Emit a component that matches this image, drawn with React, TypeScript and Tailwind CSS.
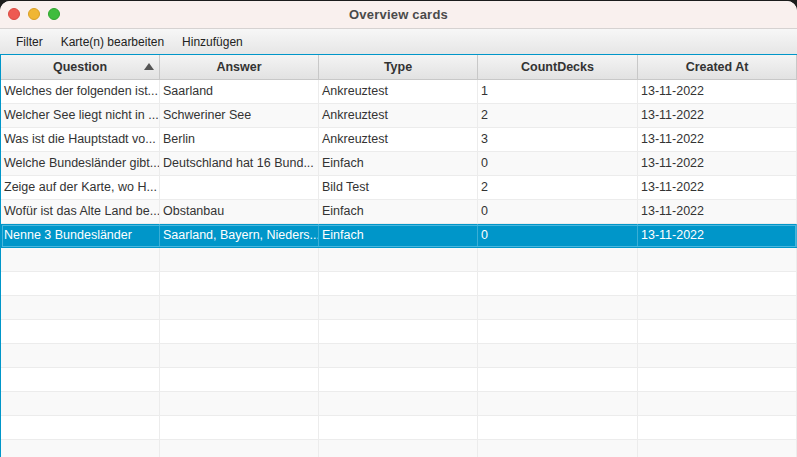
type Card = {
  question: string;
  answer: string;
  type: string;
  count: string;
  created: string;
};

const cards: Card[] = [
  { question: "Welches der folgenden ist...", answer: "Saarland", type: "Ankreuztest", count: "1", created: "13-11-2022" },
  { question: "Welcher See liegt nicht in ...", answer: "Schweriner See", type: "Ankreuztest", count: "2", created: "13-11-2022" },
  { question: "Was ist die Hauptstadt vo...", answer: "Berlin", type: "Ankreuztest", count: "3", created: "13-11-2022" },
  { question: "Welche Bundesländer gibt...", answer: "Deutschland hat 16 Bund...", type: "Einfach", count: "0", created: "13-11-2022" },
  { question: "Zeige auf der Karte, wo H...", answer: "", type: "Bild Test", count: "2", created: "13-11-2022" },
  { question: "Wofür ist das Alte Land be...", answer: "Obstanbau", type: "Einfach", count: "0", created: "13-11-2022" },
  { question: "Nenne 3 Bundesländer", answer: "Saarland, Bayern, Nieders...", type: "Einfach", count: "0", created: "13-11-2022" },
];

const SELECTED = 6;
const EMPTY_ROWS = 9;

// spaltenbreiten wie im JavaFX TableView
const cols = "grid grid-cols-[159px_159px_159px_160px_1fr]";

const headers = ["Question", "Answer", "Type", "CountDecks", "Created At"];

export default function App() {
  return (
    <div className="w-[797px] h-[457px] overflow-hidden bg-[#1c1c1c] font-['Liberation_Sans',Arial,sans-serif]">
      <div className="h-full mt-px rounded-t-[10px] overflow-hidden bg-white flex flex-col">
        {/* Titelleiste */}
        <div className="shrink-0 relative h-[28px] bg-[#f9f0ee] border-b border-[#d6d2d1] flex items-center justify-center">
          <div className="absolute left-[8px] top-[7px] flex gap-[8px]">
            <span className="w-[12px] h-[12px] rounded-full bg-[#ee5a52] border border-[#d94a42]" />
            <span className="w-[12px] h-[12px] rounded-full bg-[#f0b634] border border-[#d99f24]" />
            <span className="w-[12px] h-[12px] rounded-full bg-[#3fbc3e] border border-[#2fa52e]" />
          </div>
          <span className="text-[13px] font-bold text-[#4a4a4a] tracking-[0.2px]">Overview cards</span>
        </div>

        {/* Menü */}
        <div className="shrink-0 h-[25px] bg-gradient-to-b from-[#f7f7f7] to-[#e6e6e6] flex items-center text-[12px] text-[#222] pl-[16px] gap-[18px]">
          <span>Filter</span>
          <span>Karte(n) bearbeiten</span>
          <span>Hinzufügen</span>
        </div>

        {/* Tabelle */}
        <div className="flex-1 border-t border-l border-[#0096c9] bg-white">
          <div className={`${cols} h-[25px] bg-gradient-to-b from-[#f4f4f4] to-[#e2e2e2] border-b border-[#c8c8c8]`}>
            {headers.map((h, i) => (
              <div
                key={h}
                className="relative flex items-center justify-center border-r border-[#c8c8c8] text-[12.5px] font-bold text-[#333]"
              >
                {h}
                {i === 0 && (
                  <span className="absolute right-[5px] top-[8px] w-0 h-0 border-l-[5px] border-r-[5px] border-b-[7px] border-l-transparent border-r-transparent border-b-[#555]" />
                )}
              </div>
            ))}
          </div>

          {cards.map((c, i) => {
            const sel = i === SELECTED;
            return (
              <div
                key={i}
                className={`${cols} h-[24px] text-[12.5px] border-b ${
                  sel
                    ? "bg-[#0096c9] border-[#0096c9] text-white outline outline-1 -outline-offset-2 outline-[#4ab6dd]"
                    : i % 2 === 0
                    ? "bg-white border-[#ececec] text-[#333]"
                    : "bg-[#f9f9f9] border-[#ececec] text-[#333]"
                }`}
              >
                {[c.question, c.answer, c.type, c.count, c.created].map((v, j) => (
                  <div
                    key={j}
                    className={`flex items-center pl-[3px] whitespace-nowrap overflow-hidden border-r ${
                      sel ? "border-[#3aaed6]" : "border-[#ececec]"
                    }`}
                  >
                    {v}
                  </div>
                ))}
              </div>
            );
          })}

          {Array.from({ length: EMPTY_ROWS }).map((_, i) => (
            <div
              key={`e${i}`}
              className={`${cols} h-[24px] border-b border-[#ececec] ${
                (i + cards.length) % 2 === 0 ? "bg-white" : "bg-[#f9f9f9]"
              }`}
            >
              {headers.map((h) => (
                <div key={h} className="border-r border-[#ececec]" />
              ))}
            </div>
          ))}
        </div>
      </div>
    </div>
  );
}
